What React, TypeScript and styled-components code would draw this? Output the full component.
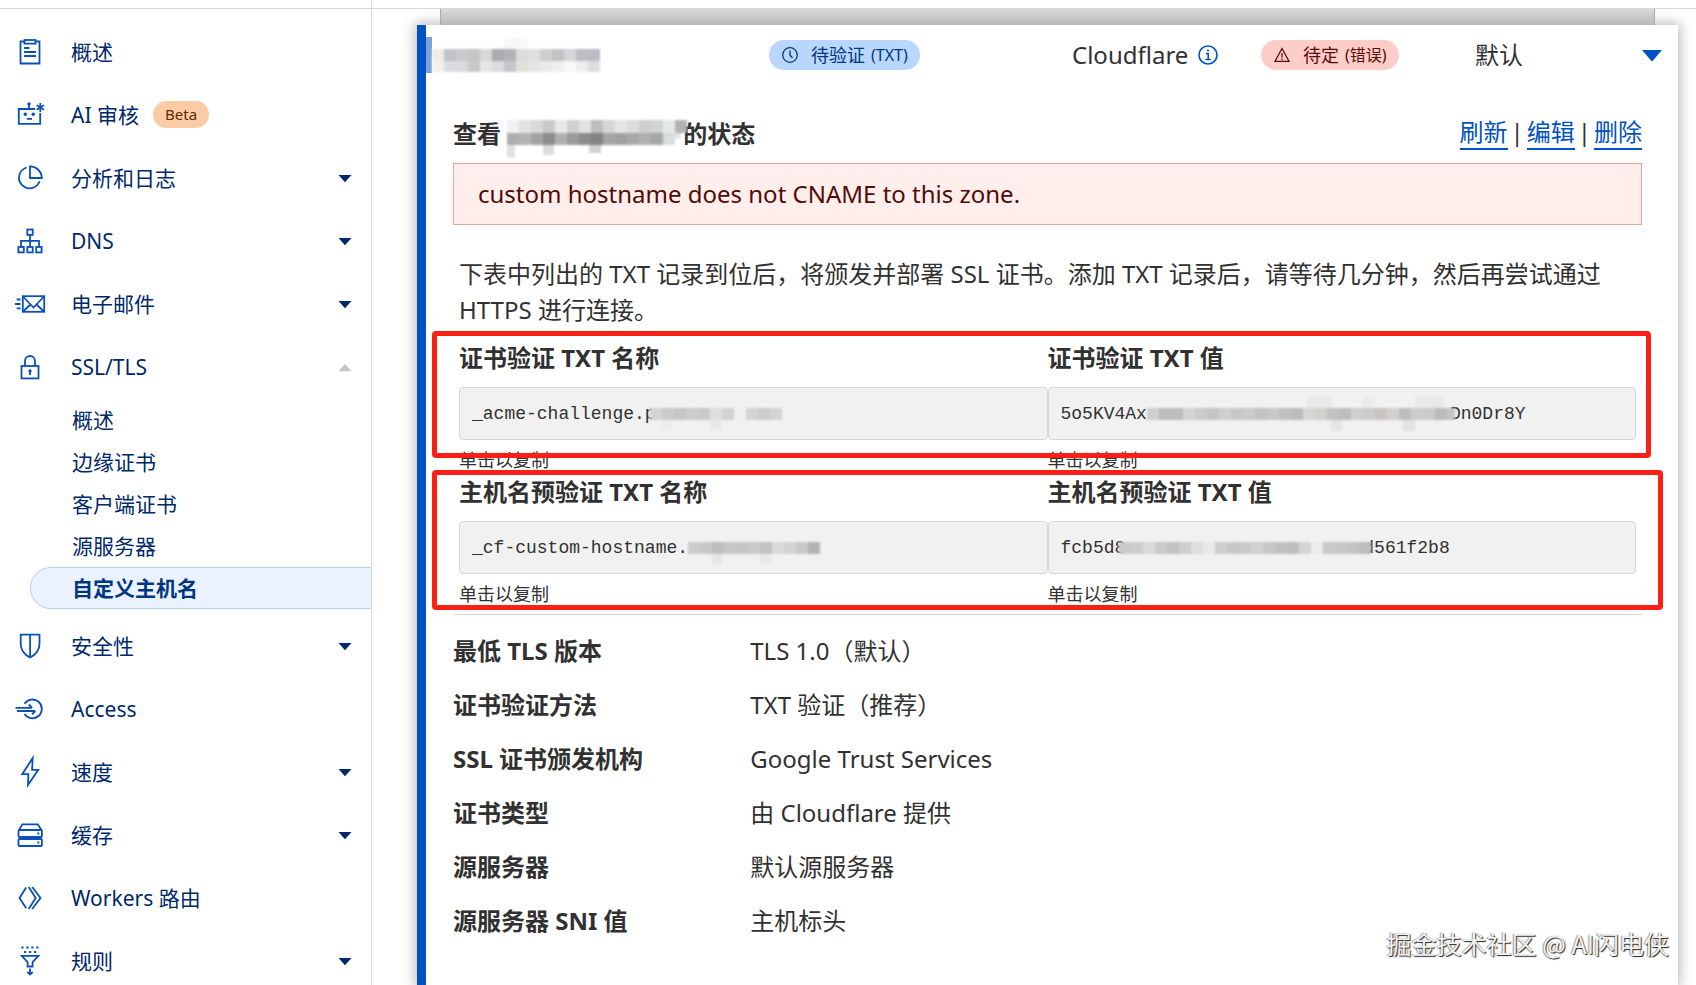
import React from "react";
import styled, { createGlobalStyle, css } from "styled-components";

const GlobalStyle = createGlobalStyle`
  *, *::before, *::after { box-sizing: border-box; }
  body {
    margin: 0;
    background: #fff;
    color: #313131;
    font-family: "Noto Sans", "Noto Sans CJK SC", sans-serif;
    font-size: 24px;
    line-height: 36px;
  }
  h2, h3, p, ul, dl, dd { margin: 0; padding: 0; }
  ul { list-style: none; }
  button { font: inherit; color: inherit; background: none; border: 0; padding: 0; text-align: left; cursor: pointer; }
  a { color: inherit; text-decoration: none; }
`;

const Shell = styled.div`
  position: relative;
  display: flex;
  height: 100vh;
  overflow: hidden;
`;

const TopRule = styled.div`
  flex: none;
  height: 9px;
  border-bottom: 1px solid #d5d7d8;
`;

/* ---------- sidebar ---------- */

const Sidebar = styled.nav`
  flex: 0 0 372px;
  border-right: 1px solid #d5d7d8;
  color: #00296b;
  font-size: 21px;
  overflow: hidden;
`;

const NavList = styled.ul`
  padding-top: 11px;
`;

const navRow = css`
  display: flex;
  align-items: center;
  width: 100%;
  height: 63px;
  padding: 0 19px 0 15px;
`;

const NavLink = styled.a`${navRow}`;
const NavToggle = styled.button`${navRow}`;

const NavIcon = styled.svg`
  flex: none;
  width: 30px;
  height: 30px;
  margin-right: 26px;
  overflow: visible;
  fill: none;
  stroke: #0a50b8;
  stroke-width: 1.8;
`;

const NavLabel = styled.span`
  white-space: nowrap;
`;

const BetaTag = styled.span`
  margin-left: 14px;
  padding: 0 12px;
  border-radius: 14px;
  background: #fbcba5;
  color: #5c2c05;
  font-size: 15px;
  line-height: 27px;
`;

const Caret = styled.svg<{ $color: string; $size: number }>`
  flex: none;
  width: ${(p) => p.$size}px;
  height: ${(p) => p.$size}px;
  margin-left: auto;
  fill: ${(p) => p.$color};
`;

const SubList = styled.ul`
  padding: 1px 0 5px;
`;

const SubLink = styled.a<{ $active?: boolean }>`
  display: flex;
  align-items: center;
  height: 42px;
  margin-left: 30px;
  padding-left: 41px;
  border: 1px solid transparent;
  border-right: 0;
  border-radius: 21px 0 0 21px;
  ${(p) =>
    p.$active &&
    css`
      background: #ebf2ff;
      border-color: #b8d0ea;
      color: #003681;
      font-weight: 700;
    `}
`;

/* ---------- main area ---------- */

const Main = styled.main`
  flex: 1;
  min-width: 0;
  display: flex;
  flex-direction: column;
`;

const TableEdge = styled.div`
  position: relative;
  z-index: 1;
  flex: none;
  height: 16px;
  margin: 0 41px 0 68px;
  border: solid #a9a9a9;
  border-width: 0 1px;
  background: linear-gradient(#dadada, #b9b9b9);
`;

const Card = styled.section`
  flex: 1 0 auto;
  margin: 0 18px 0 45px;
  border-left: 9px solid #0051c3;
  background: #fff;
  box-shadow: 0 0 12px 2px rgba(0, 0, 0, 0.28);
`;

const HostRow = styled.header`
  display: grid;
  grid-template-columns: 343fr 303fr 189fr 214fr 167fr 36fr;
  align-items: center;
  height: 60px;
`;

const HostCell = styled.div`
  display: flex;
  align-items: center;
  gap: 10px;
  min-width: 0;
  white-space: nowrap;
`;

const FocusMark = styled.span`
  width: 6px;
  height: 36px;
  background: #7aa3dc;
`;

const Badge = styled.span<{ $tone: "info" | "error" }>`
  display: inline-flex;
  align-items: center;
  height: 30px;
  padding: 0 12px;
  border-radius: 15px;
  font-size: 18px;
  background: ${(p) => (p.$tone === "info" ? "#b9d6ff" : "#ffcdc9")};
  color: ${(p) => (p.$tone === "info" ? "#003681" : "#5a0c06")};

  svg {
    width: 18px;
    height: 18px;
    margin-right: 12px;
    fill: none;
    stroke: currentColor;
    stroke-width: 1.3;
  }

  small {
    margin-left: 6px;
    font-size: 16px;
  }
`;

const InfoIcon = styled.svg`
  width: 20px;
  height: 20px;
  fill: none;
  stroke: #0051c3;
  stroke-width: 1.6;
`;

const Details = styled.div`
  padding: 31px 36px 24px 27px;
`;

const TitleRow = styled.div`
  display: flex;
  justify-content: space-between;
  margin-bottom: 11px;
`;

const Title = styled.h2`
  display: flex;
  align-items: center;
  font-size: 24px;
  font-weight: 700;
`;

const Actions = styled.div`
  display: flex;
  align-items: flex-start;
  gap: 3px;
`;

const ActionLink = styled.a`
  color: #0051c3;
  line-height: 32px;
  border-bottom: 2px solid #0051c3;
`;

const Divider = styled.span`
  line-height: 32px;
`;

const Alert = styled.div`
  padding: 12px 24px;
  border: 1px solid #e9a29b;
  background: #ffeeec;
  color: #520c06;
`;

const Intro = styled.p`
  padding: 31px 12px 12px 6px;
`;

const RecordGroup = styled.div`
  position: relative;
  display: grid;
  grid-template-columns: 1fr 1fr;
  height: 134px;
  margin: 0 6px;
`;

const Record = styled.div`
  min-width: 0;
`;

const RecordTitle = styled.h3`
  margin-bottom: 11px;
  font-size: 24px;
  font-weight: 700;
`;

const CodeButton = styled.button`
  display: flex;
  align-items: center;
  width: 100%;
  height: 53px;
  padding: 0 12px;
  border: 1px solid #d5d7d8;
  border-radius: 4px;
  background: #f1f1f1;

  code {
    font-family: "Liberation Mono", monospace;
    font-size: 18px;
  }
`;

const CopyHint = styled.p`
  padding-top: 7px;
  font-size: 18px;
  line-height: 27px;
`;

const Highlight = styled.div<{ $right: number; $height: number; $top: number }>`
  position: absolute;
  top: ${(p) => p.$top}px;
  left: -27px;
  right: ${(p) => p.$right}px;
  height: ${(p) => p.$height}px;
  border: 5px solid #fb2015;
  border-radius: 4px;
  pointer-events: none;
`;

const Summary = styled.dl`
  margin-top: 6px;
  padding-top: 9px;
  border-top: 1px solid #d5d7d8;
`;

const SummaryRow = styled.div`
  display: grid;
  grid-template-columns: 1fr 3fr;
  padding: 9px 0;

  dt { font-weight: 700; }
`;

const Watermark = styled.div`
  position: absolute;
  right: 27px;
  bottom: 24px;
  color: #f2f2f2;
  font-family: "Noto Sans CJK SC", sans-serif;
  font-size: 25px;
  text-shadow: 1px 1px 1px #222, -1px 0 1px #999;
`;

const MosaicSvg = styled.svg<{ $lead: number; $trail: number }>`
  flex: none;
  margin-left: ${(p) => -p.$lead}px;
  margin-right: ${(p) => -p.$trail}px;
  z-index: 1;
  overflow: visible;
  filter: blur(1px);
`;

type Tile = [x: number, y: number, w: number, h: number, fill: string];

type MosaicProps = { width: number; tiles: Tile[]; lead?: number; trail?: number };

function Mosaic({ width, tiles, lead = 0, trail = 0 }: MosaicProps) {
  return (
    <MosaicSvg width={width} height={36} $lead={lead} $trail={trail} aria-hidden="true">
      {tiles.map(([x, y, w, h, fill], i) => (
        <rect key={i} x={x} y={y} width={w} height={h} fill={fill} />
      ))}
    </MosaicSvg>
  );
}

const strip = (y: number, h: number, step: number, fills: string[]): Tile[] =>
  fills.map((f, i) => [i * step, y, step, h, f]);

const hostTiles: Tile[] = [
  ...strip(12, 12, 12, ["#efece8", "#bfc3c8", "#c9c9cb", "#c4c6c8", "#d8d8da", "#a8abb1", "#b2b4ba", "#dcdcda", "#e0e0e0", "#cfcfd1", "#c0c2c6", "#d6d6d8", "#bcbec2", "#b9bcc2"]),
  ...strip(24, 11, 12, ["#f3efe9", "#d9dde2", "#dadada", "#c9c9cb", "#e6e6e6", "#dcdcde", "#c6c6ca", "#e2e0da", "#e6e6e6", "#eaeaea", "#eeeeee", "#f8f8f8", "#eeeeee", "#dcdcde"]),
  [72, 0, 24, 12, "#f8f8f8"],
];

const titleTiles: Tile[] = [
  ...strip(4, 13, 12, ["#f0f0f0", "#e2e2e2", "#d8d8d8", "#c9c9c9", "#e6e8e8", "#d0d0d0", "#e2e2e2", "#bdbdbd", "#d6d6d6", "#e4e6e6", "#dcdcdc", "#cfcfcf", "#d2d2d2", "#e4e8e8", "#b0b2b4"]),
  ...strip(17, 12, 12, ["#adadad", "#b2b4b4", "#a3a3a3", "#8e8c88", "#aeb0b2", "#9b9b9b", "#8c8c8c", "#848482", "#a4a6a6", "#a0a0a0", "#a9a9a9", "#b0b0b0", "#a6a6a6", "#d9dddd"]),
  [168, 17, 6, 6, "#e4eaea"],
  [0, 29, 8, 12, "#e0e0e0"],
  [36, 29, 11, 10, "#dcdcdc"],
  [82, 29, 12, 8, "#d2d2d2"],
];

const acmeTiles: Tile[] = [
  ...strip(12, 12, 12, ["#d4d4d4", "#cacaca", "#c6c6c6", "#cccccc", "#c9c9c9", "#dedede", "#d2d2d2", "#efefef", "#d3d3d3", "#cccccc", "#d4d4d4"]),
  [12, 24, 10, 10, "#ececec"],
  [60, 24, 11, 10, "#e8e8e8"],
];

const prefixTiles: Tile[] = [
  ...strip(12, 12, 12, ["#cdcdcd", "#c8c8c8", "#bebebe", "#c8c8c8", "#c4c4c2", "#cacaca", "#c2c2c0", "#dadada", "#d4d4d4", "#c8c8c8", "#b4b4b4"]),
  [24, 24, 10, 10, "#e5e5e5"],
  [72, 24, 11, 10, "#e8e8e8"],
];

const tokenTiles: Tile[] = [
  ...strip(12, 12, 12, ["#cfcfcf", "#bcbcbc", "#bdbdbd", "#d4d4d4", "#cacaca", "#c4c4c4", "#cfcfcf", "#c8c8c8", "#cacaca", "#c2c2c2", "#c8c8c8", "#c0c0c0", "#bcbcbc", "#d6d6d6", "#d0d0cc", "#c2c2c0", "#bdbdbd", "#cfcfcf", "#cccccc", "#c8c4c2", "#d0d0d0", "#bebebe", "#cdcdcd", "#cacaca", "#bbbbbb"]),
  [300, 12, 8, 12, "#c4c4c4"],
  [160, 0, 24, 12, "#e9e9e9"],
  [216, 0, 12, 12, "#ebebeb"],
  [268, 0, 28, 12, "#e9e9e9"],
  [184, 24, 11, 11, "#e5e5e5"],
  [256, 24, 12, 11, "#e3e3e3"],
];

const hashTiles: Tile[] = strip(12, 12, 12, ["#c9c9c9", "#cccccc", "#dadada", "#cacaca", "#c2c2c2", "#cecece", "#dedede", "#e8e8e8", "#cecece", "#c8c8c8", "#cacaca", "#d2d2d2", "#c6c6c6", "#c0c0c0", "#bebebe", "#d4d4d4", "#ececec", "#cacaca", "#c6c6c6", "#c3c3c3", "#bdbdbd"]);

/* ---------- icons ---------- */

const icons: Record<string, React.ReactNode> = {
  overview: (
    <>
      <path d="M9 4.5H5.5v22h19v-22H21" />
      <rect x="9.5" y="3" width="11" height="3.6" />
      <path d="M9 11h5.500M9 15h12M9 19h12" />
    </>
  ),
  robot: (
    <>
      <path d="M20 9H3.800v14.800h21.400V13" />
      <path d="M14 9V4.500M11.800 18.800h5.200M25.300 3v9M21.600 5.200l7.400 4.500M29 5.200l-7.400 4.500" />
      <circle cx="14" cy="4" r="1.700" fill="#0a50b8" stroke="none" />
      <circle cx="10.300" cy="14.300" r="1.700" fill="#0a50b8" stroke="none" />
      <circle cx="18.200" cy="14.300" r="1.700" fill="#0a50b8" stroke="none" />
    </>
  ),
  analytics: (
    <>
      <path d="M11.700 4.500A10.600 10.600 0 1 0 24.600 18.300" />
      <path d="M15 3.400V15h11.800A11.700 11.700 0 0 0 15 3.400z" />
    </>
  ),
  dns: (
    <>
      <rect x="12.300" y="3.500" width="5.400" height="5.400" />
      <rect x="3.400" y="21" width="5.400" height="5.400" />
      <rect x="12.300" y="21" width="5.400" height="5.400" />
      <rect x="21.200" y="21" width="5.400" height="5.400" />
      <path d="M15 9v12M6 21v-6.200h18V21" />
    </>
  ),
  email: (
    <>
      <rect x="7.800" y="7.200" width="21.400" height="15.600" />
      <path d="M8 7.500l10.500 11L29 7.500M8 22.500l7.500-7M29 22.500l-7.500-7M1.700 10.500h3.800M0 15h5.500M1.700 19.300h3.800" />
    </>
  ),
  lock: (
    <>
      <rect x="6.500" y="14" width="17" height="12.400" />
      <path d="M10 14V9a5 5 0 0 1 10 0v5M15 19.500v3.500" />
      <circle cx="15" cy="19" r="1.700" fill="#0a50b8" stroke="none" />
    </>
  ),
  shield: <path d="M5.700 3.700h18.800v9c0 6-4 11-9.400 13.800-5.400-2.800-9.400-7.800-9.400-13.800zM15.100 3.700v22.500" />,
  access: (
    <>
      <path d="M9.500 9.800a9.400 9.400 0 1 1 0 10.200" />
      <path d="M.5 13.800h16.200M13.700 10.500l3.500 3.300M2 17h18.300M20.300 17l-3.300 3.300" />
    </>
  ),
  bolt: <path d="M17.700 1L7.200 17.200h6.200L13 28l10.300-15.200h-6.200z" />,
  cache: (
    <>
      <rect x="3.500" y="10" width="23.400" height="7" rx="1" />
      <rect x="3.500" y="19" width="23.400" height="7" rx="1" />
      <path d="M3.800 10.300l3.600-6h15.400l3.800 6M22.300 13.500h2M22.300 22.500h2" />
    </>
  ),
  workers: <path d="M11.200 4.500L4.500 15l6.700 10.300M13.700 4L20.700 15l-7 11M17.200 4l8.300 11-8.300 11" />,
  rules: (
    <>
      <path d="M6.800 9.800h16.600l-5.800 6.400v4.300h-5v-4.300zM15 22.500V28M12.300 26l2.700 2.500 2.700-2.500" />
      <path d="M6.300 1.500h18" strokeWidth="2.200" strokeDasharray="2.200 2.800" />
      <path d="M9 6h13.500" strokeWidth="2.200" strokeDasharray="2.200 2.800" />
    </>
  ),
};

function CaretIcon({ up, color, size = 14 }: { up?: boolean; color: string; size?: number }) {
  return (
    <Caret viewBox="0 0 14 14" $color={color} $size={size} aria-hidden="true">
      <path d={up ? "M.5 11.200L7 4l6.500 7.200z" : "M.5 4h13L7 11.200z"} />
    </Caret>
  );
}

type NavEntry = { icon: string; label: string; menu?: boolean; tag?: string; children?: string[] };

const navEntries: NavEntry[] = [
  { icon: "overview", label: "概述" },
  { icon: "robot", label: "AI 审核", tag: "Beta" },
  { icon: "analytics", label: "分析和日志", menu: true },
  { icon: "dns", label: "DNS", menu: true },
  { icon: "email", label: "电子邮件", menu: true },
  { icon: "lock", label: "SSL/TLS", menu: true, children: ["概述", "边缘证书", "客户端证书", "源服务器", "自定义主机名"] },
  { icon: "shield", label: "安全性", menu: true },
  { icon: "access", label: "Access" },
  { icon: "bolt", label: "速度", menu: true },
  { icon: "cache", label: "缓存", menu: true },
  { icon: "workers", label: "Workers 路由" },
  { icon: "rules", label: "规则", menu: true },
];

function NavItem({ entry }: { entry: NavEntry }) {
  const body = (
    <>
      <NavIcon viewBox="0 0 30 30" aria-hidden="true">{icons[entry.icon]}</NavIcon>
      <NavLabel>{entry.label}</NavLabel>
      {entry.tag && <BetaTag>{entry.tag}</BetaTag>}
    </>
  );
  if (!entry.menu) {
    return <li><NavLink href="#">{body}</NavLink></li>;
  }
  const open = Boolean(entry.children);
  return (
    <li>
      <NavToggle type="button" aria-expanded={open}>
        {body}
        <CaretIcon up={open} color={open ? "#c3c5c8" : "#00296b"} />
      </NavToggle>
      {entry.children && (
        <SubList>
          {entry.children.map((label) => (
            <li key={label}>
              <SubLink href="#" $active={label === "自定义主机名"}>{label}</SubLink>
            </li>
          ))}
        </SubList>
      )}
    </li>
  );
}

function TxtRecord({ title, children }: { title: string; children: React.ReactNode }) {
  return (
    <Record>
      <RecordTitle>{title}</RecordTitle>
      <CodeButton type="button" aria-label={`${title} 单击以复制`}>{children}</CodeButton>
      <CopyHint>单击以复制</CopyHint>
    </Record>
  );
}

const summary: [string, string][] = [
  ["最低 TLS 版本", "TLS 1.0（默认）"],
  ["证书验证方法", "TXT 验证（推荐）"],
  ["SSL 证书颁发机构", "Google Trust Services"],
  ["证书类型", "由 Cloudflare 提供"],
  ["源服务器", "默认源服务器"],
  ["源服务器 SNI 值", "主机标头"],
];

export default function App() {
  return (
    <>
      <GlobalStyle />
      <Shell>
        <Sidebar>
          <TopRule />
          <NavList>
            {navEntries.map((entry) => (
              <NavItem key={entry.icon} entry={entry} />
            ))}
          </NavList>
        </Sidebar>

        <Main>
          <TopRule />
          <TableEdge />
          <Card>
            <HostRow>
              <HostCell>
                <FocusMark />
                <Mosaic width={168} tiles={hostTiles} lead={10} />
              </HostCell>
              <HostCell>
                <Badge $tone="info">
                  <svg viewBox="0 0 18 18" aria-hidden="true">
                    <circle cx="9" cy="9" r="7.300" />
                    <path d="M9 4.500V9l2.500 3" />
                  </svg>
                  待验证 <small>(TXT)</small>
                </Badge>
              </HostCell>
              <HostCell>
                Cloudflare
                <InfoIcon viewBox="0 0 20 20" role="img" aria-label="信息">
                  <circle cx="10" cy="10" r="9" />
                  <path d="M8 8.500h2.200V14.500M7.500 14.500h5.200M9 5.500h2" />
                </InfoIcon>
              </HostCell>
              <HostCell>
                <Badge $tone="error">
                  <svg viewBox="0 0 18 18" aria-hidden="true">
                    <path d="M9 2.500L16 15.300H2zM9 7v4.500M9 12.500v1.500" />
                  </svg>
                  待定 <small>(错误)</small>
                </Badge>
              </HostCell>
              <HostCell>默认</HostCell>
              <button type="button" aria-label="收起">
                <Caret viewBox="0 0 20 20" $color="#0051c3" $size={20} aria-hidden="true">
                  <path d="M0 6h20L11 16.500q-1 1-2 0z" />
                </Caret>
              </button>
            </HostRow>

            <Details>
              <TitleRow>
                <Title>
                  查看&nbsp;
                  <Mosaic width={176} tiles={titleTiles} />
                  的状态
                </Title>
                <Actions>
                  <ActionLink href="#">刷新</ActionLink>
                  <Divider>|</Divider>
                  <ActionLink href="#">编辑</ActionLink>
                  <Divider>|</Divider>
                  <ActionLink href="#">删除</ActionLink>
                </Actions>
              </TitleRow>

              <Alert role="alert">custom hostname does not CNAME to this zone.</Alert>

              <Intro>
                下表中列出的 TXT 记录到位后，将颁发并部署 SSL 证书。添加 TXT 记录后，请等待几分钟，然后再尝试通过 HTTPS 进行连接。
              </Intro>

              <RecordGroup>
                <TxtRecord title="证书验证 TXT 名称">
                  <code>_acme-challenge.p</code>
                  <Mosaic width={132} tiles={acmeTiles} lead={6} />
                </TxtRecord>
                <TxtRecord title="证书验证 TXT 值">
                  <code>5o5KV4Ax</code>
                  <Mosaic width={308} tiles={tokenTiles} trail={5} />
                  <code>Dn0Dr8Y</code>
                </TxtRecord>
                <Highlight $top={-9} $right={-15} $height={127} />
              </RecordGroup>

              <RecordGroup>
                <TxtRecord title="主机名预验证 TXT 名称">
                  <code>_cf-custom-hostname.</code>
                  <Mosaic width={132} tiles={prefixTiles} />
                </TxtRecord>
                <TxtRecord title="主机名预验证 TXT 值">
                  <code>fcb5d8</code>
                  <Mosaic width={250} tiles={hashTiles} lead={6} trail={6} />
                  <code>d561f2b8</code>
                </TxtRecord>
                <Highlight $top={-4} $right={-27} $height={140} />
              </RecordGroup>

              <Summary>
                {summary.map(([term, value]) => (
                  <SummaryRow key={term}>
                    <dt>{term}</dt>
                    <dd>{value}</dd>
                  </SummaryRow>
                ))}
              </Summary>
            </Details>
          </Card>
        </Main>

        <Watermark>掘金技术社区 @ AI闪电侠</Watermark>
      </Shell>
    </>
  );
}
